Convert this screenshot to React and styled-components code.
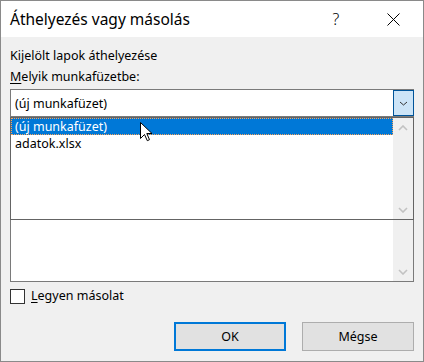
import React from 'react';
import styled, { createGlobalStyle } from 'styled-components';

const Global = createGlobalStyle`
  html, body { margin: 0; padding: 0; background: #f0f0f0; }
  * { box-sizing: border-box; }
`;

const Window = styled.div`
  width: 424px;
  height: 362px;
  border: 1px solid #8a8a8a;
  background: #f0f0f0;
  display: flex;
  flex-direction: column;
  font-family: "Noto Sans", "Open Sans", sans-serif;
  color: #000;
`;

const TitleBar = styled.div`
  height: 36px;
  background: #fff;
  display: flex;
  align-items: center;
  padding: 0 7px 0 9px;
`;

const Title = styled.div`
  flex: 1;
  font-size: 15.5px;
  line-height: 20px;
  padding-bottom: 1px;
`;

const TitleButton = styled.div`
  width: 46px;
  height: 36px;
  display: flex;
  align-items: center;
  justify-content: center;
  font-size: 16px;
  font-weight: 300;
  margin-left: ${(p) => p.$gap || 0}px;
`;

const Body = styled.div`
  flex: 1;
  display: flex;
  flex-direction: column;
  padding: 0 9px;
`;

const Label = styled.div`
  font-size: 12.5px;
  line-height: 16px;
  margin-top: ${(p) => p.$mt}px;
  u { text-decoration-thickness: 1px; text-underline-offset: 2px; }
`;

const Combo = styled.div`
  margin-top: 4px;
  height: 28px;
  border: 1px solid #7a7a7a;
  background: #fff;
  display: flex;
  align-items: center;
  justify-content: space-between;
  font-size: 12.5px;
  padding-left: 4px;
`;

const DropButton = styled.div`
  width: 21px;
  height: 26px;
  background: #cce4f7;
  border: 1px solid #005499;
  margin-right: -1px;
  display: flex;
  align-items: center;
  justify-content: center;
`;

const ListArea = styled.div`
  position: relative;
  height: 165px;
`;

const ListBox = styled.div`
  height: 100%;
  border: 1px solid #7a7a7a;
  background: #fff;
  display: flex;
  justify-content: flex-end;
`;

const Popup = styled.div`
  position: absolute;
  left: 0;
  right: 0;
  top: 0;
  height: 103px;
  border: 1px solid #646464;
  background: #fff;
  display: flex;
`;

const Items = styled.div`
  flex: 1;
  display: flex;
  flex-direction: column;
`;

const Item = styled.div`
  height: 17px;
  font-size: 12.5px;
  line-height: 15px;
  padding-left: 3px;
  border: 1px ${(p) => (p.$selected ? 'dotted #f7a35c' : 'solid transparent')};
  background: ${(p) => (p.$selected ? '#0078d7' : 'transparent')};
  color: ${(p) => (p.$selected ? '#fff' : '#000')};
`;

const ScrollBar = styled.div`
  width: 20px;
  background: #f0f0f0;
  display: flex;
  flex-direction: column;
  justify-content: ${(p) => p.$justify || 'space-between'};
`;

const Arrow = styled.div`
  height: 19px;
  display: flex;
  align-items: center;
  justify-content: center;
`;

const Cursor = styled.svg`
  position: absolute;
  left: 130px;
  top: 5px;
`;

const CheckRow = styled.label`
  margin-top: 6px;
  display: flex;
  align-items: center;
  gap: 6px;
  font-size: 12.5px;
  line-height: 16px;
  u { text-decoration-thickness: 1px; text-underline-offset: 2px; }
`;

const Box = styled.span`
  width: 15px;
  height: 15px;
  border: 1px solid #333;
  background: #fff;
`;

const Buttons = styled.div`
  margin-top: 18px;
  display: flex;
  justify-content: flex-end;
  gap: 16px;
`;

const Button = styled.div`
  width: 112px;
  height: 29px;
  background: #e1e1e1;
  border: ${(p) => (p.$primary ? '2px solid #0078d7' : '1px solid #adadad')};
  display: flex;
  align-items: center;
  justify-content: center;
  font-size: 12.5px;
`;

const Chevron = ({ up, color = '#c2c2c2', w = 10, h = 6, sw = 1.6 }) => (
  <svg width={w} height={h} viewBox={`0 0 ${w} ${h}`}>
    <polyline
      points={up ? `1,${h - 1} ${w / 2},1 ${w - 1},${h - 1}` : `1,1 ${w / 2},${h - 1} ${w - 1},1`}
      fill="none"
      stroke={color}
      strokeWidth={sw}
    />
  </svg>
);

export default function App() {
  return (
    <>
      <Global />
      <Window>
        <TitleBar>
          <Title>Áthelyezés vagy másolás</Title>
          <TitleButton>?</TitleButton>
          <TitleButton $gap={11}>
            <svg width="13" height="13" viewBox="0 0 13 13">
              <path d="M0.5 0.5 L12.5 12.5 M12.5 0.5 L0.5 12.5" stroke="#000" strokeWidth="1" />
            </svg>
          </TitleButton>
        </TitleBar>
        <Body>
          <Label $mt={11}>Kijelölt lapok áthelyezése</Label>
          <Label $mt={5}>
            <u>M</u>elyik munkafüzetbe:
          </Label>
          <Combo>
            <span>(új munkafüzet)</span>
            <DropButton>
              <Chevron color="#333" w={9} h={5} sw={1} />
            </DropButton>
          </Combo>
          <ListArea>
            <ListBox>
              <ScrollBar $justify="flex-end">
                <Arrow>
                  <Chevron />
                </Arrow>
              </ScrollBar>
            </ListBox>
            <Popup>
              <Items>
                <Item $selected>(új munkafüzet)</Item>
                <Item>adatok.xlsx</Item>
              </Items>
              <ScrollBar>
                <Arrow>
                  <Chevron up />
                </Arrow>
                <Arrow>
                  <Chevron />
                </Arrow>
              </ScrollBar>
            </Popup>
            <Cursor width="13" height="20" viewBox="0 0 13 20">
              <path
                d="M0.5 0.5 L0.5 16.5 L4.5 12.5 L7.3 18.7 L9.5 17.7 L6.8 11.5 L12 11.5 Z"
                fill="#fff"
                stroke="#000"
                strokeWidth="1"
                strokeLinejoin="miter"
              />
            </Cursor>
          </ListArea>
          <CheckRow>
            <Box />
            <span>
              <u>L</u>egyen másolat
            </span>
          </CheckRow>
          <Buttons>
            <Button $primary>OK</Button>
            <Button>Mégse</Button>
          </Buttons>
        </Body>
      </Window>
    </>
  );
}
